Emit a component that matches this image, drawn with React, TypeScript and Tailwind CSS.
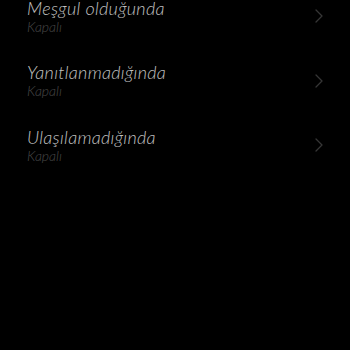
import React from "react";
import { ChevronRight } from "lucide-react";

const rows = [
  { title: "Meşgul olduğunda", value: "Kapalı" },
  { title: "Yanıtlanmadığında", value: "Kapalı" },
  { title: "Ulaşılamadığında", value: "Kapalı" },
];

export default function App() {
  return (
    <div className="h-[350px] w-[350px] overflow-hidden bg-black font-['Lato',sans-serif]">
      <div className="-mt-[16px] flex flex-col">
        {rows.map((row) => (
          <div
            key={row.title}
            className="flex h-[64.5px] items-center justify-between pl-[27px] pr-[19px]"
          >
            <div className="flex flex-col">
              <span className="text-[18px] font-light italic leading-[20px] tracking-[0.3px] text-[#c0c0c0]">
                {row.title}
              </span>
              <span className="text-[14px] font-light italic leading-[17px] text-[#4a4a4a]">
                {row.value}
              </span>
            </div>
            <ChevronRight className="h-[24px] w-[24px] text-[#363636]" strokeWidth={1.3} />
          </div>
        ))}
      </div>
    </div>
  );
}
